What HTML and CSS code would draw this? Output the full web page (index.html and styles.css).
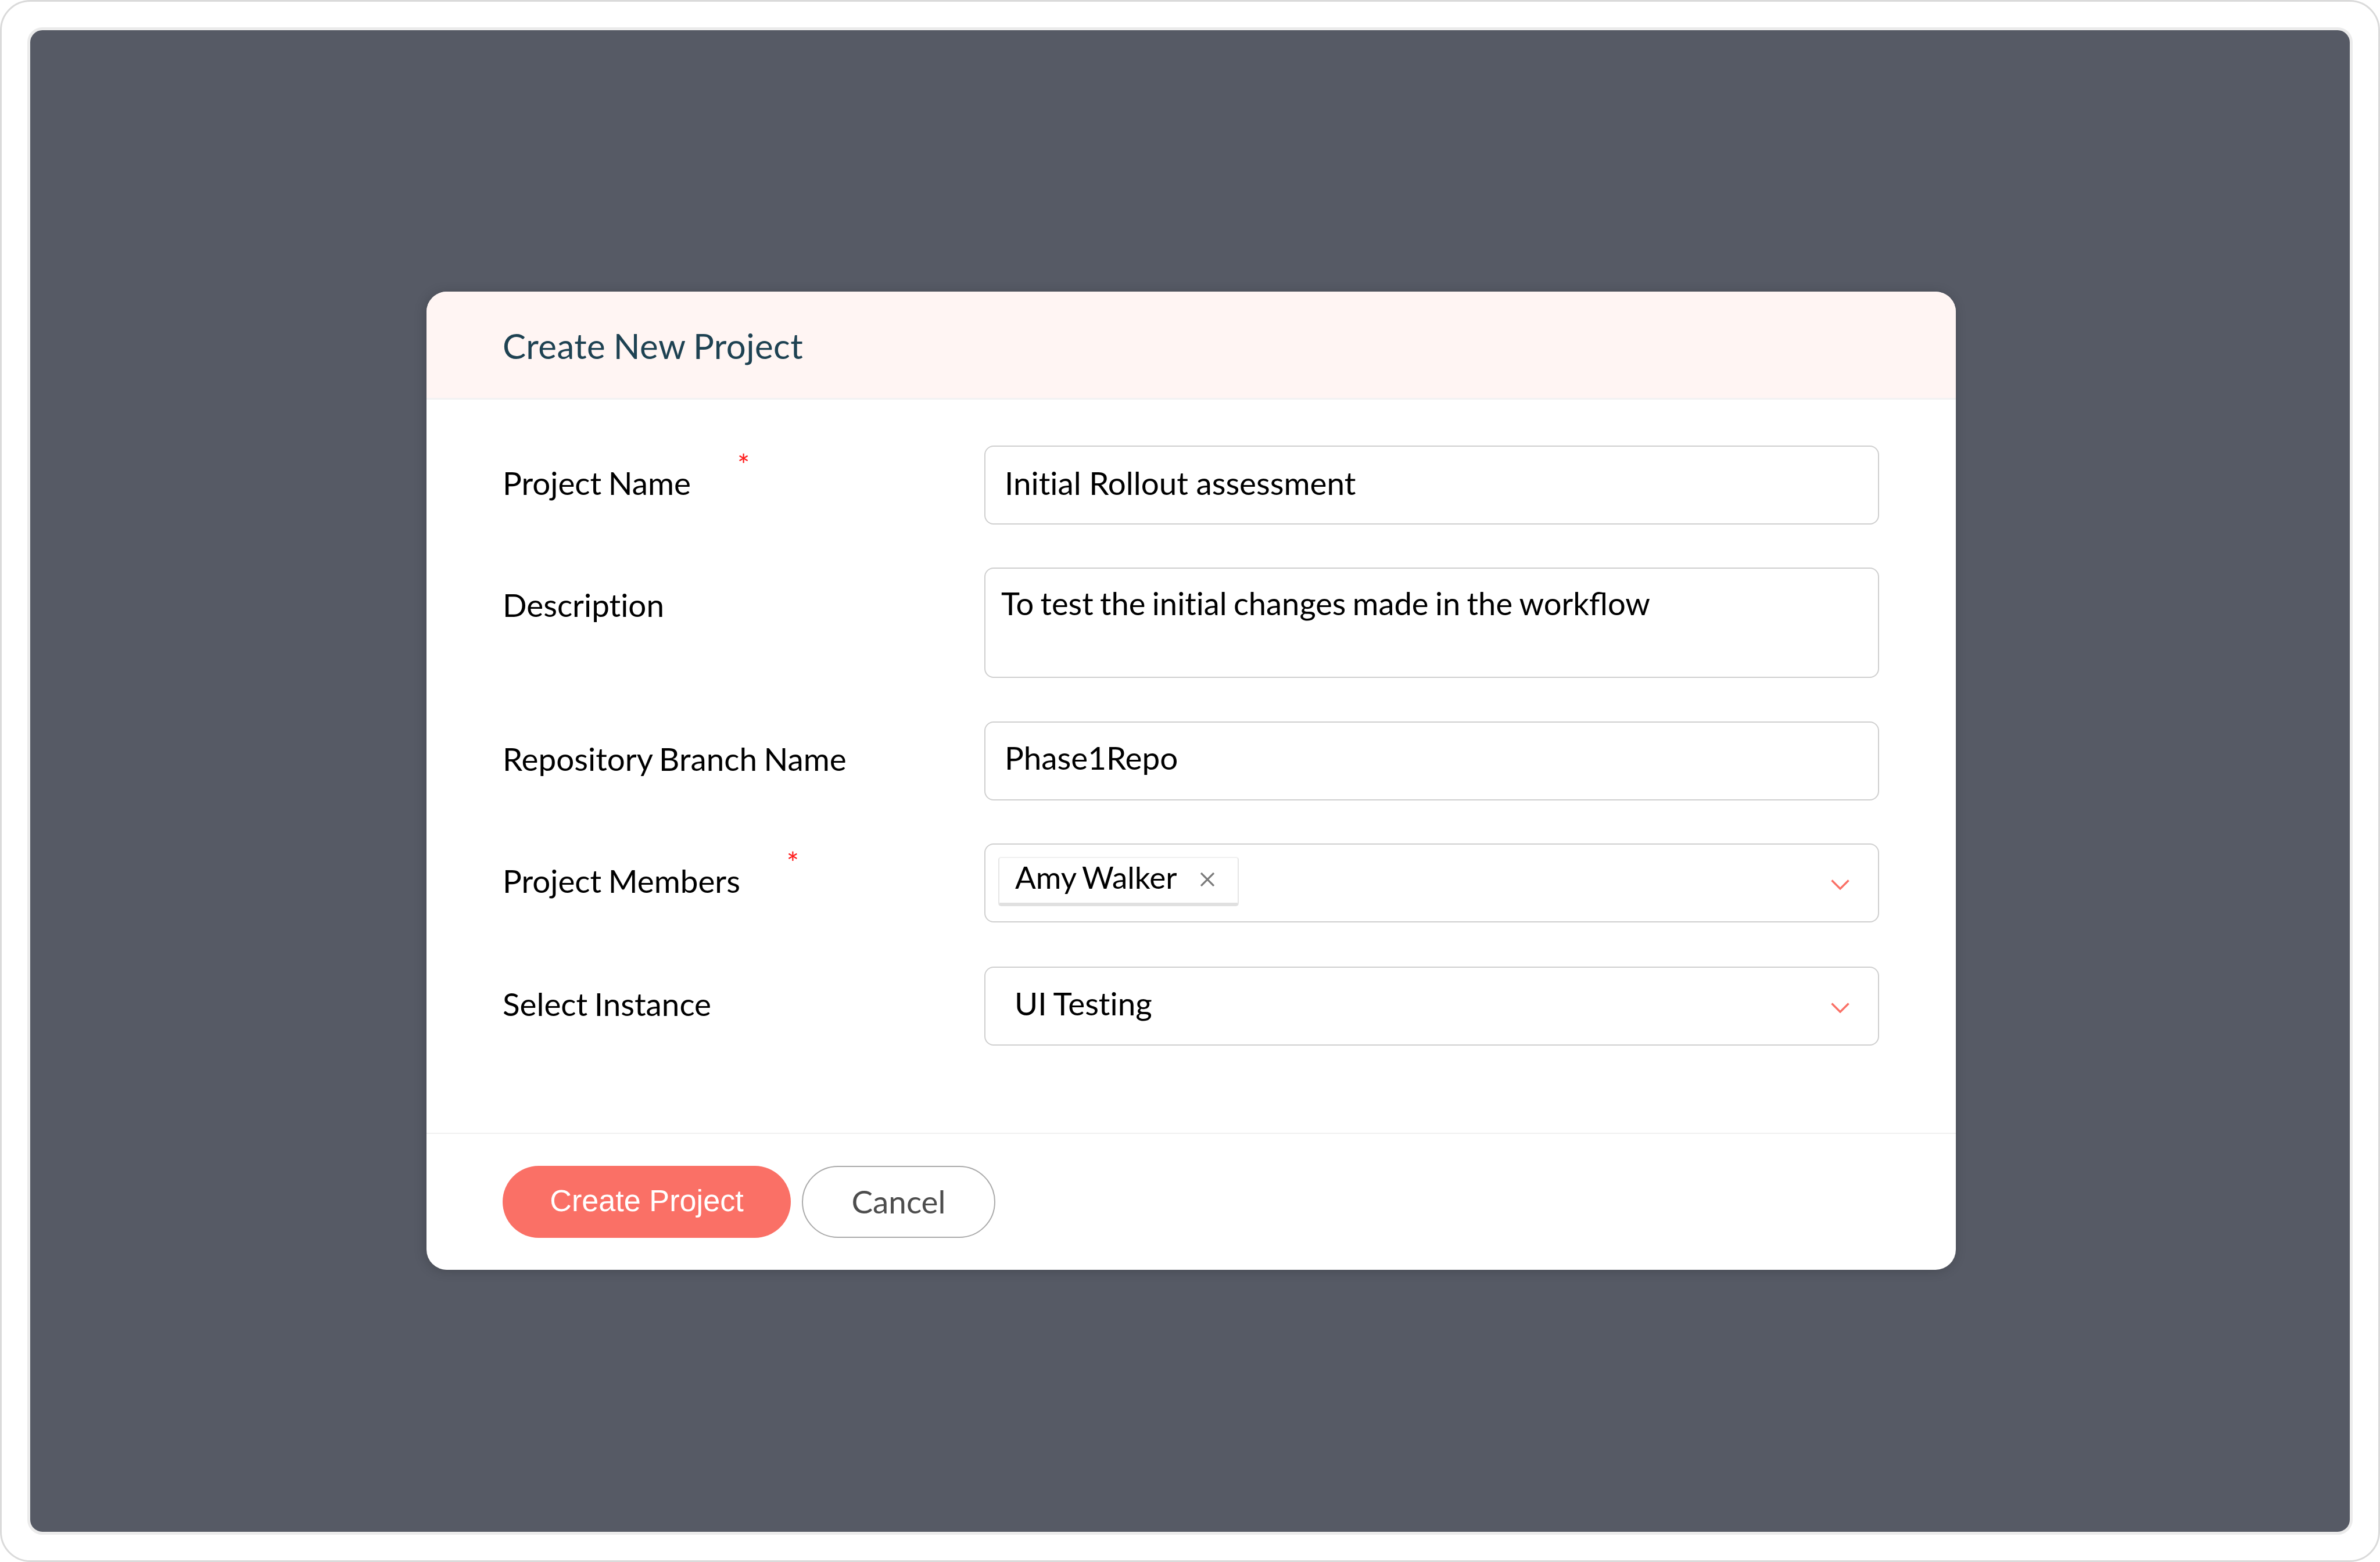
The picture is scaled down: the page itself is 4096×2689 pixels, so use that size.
FILE: index.html
```html
<!DOCTYPE html>
<html lang="en">
<head>
    <meta charset="UTF-8">
    <meta name="viewport" content="width=device-width, initial-scale=1.0">
    <title>Create New Project</title>
    <link rel="stylesheet" href="styles.css">
</head>
<body>
    <div class="frame">
        <div class="overlay">
            <div class="modal">
                <div class="modal-header">
                    <h1>Create New Project</h1>
                </div>
                <form class="modal-body">
                    <div class="form-row">
                        <label>Project Name<span class="required">*</span></label>
                        <div class="field">Initial Rollout assessment</div>
                    </div>
                    <div class="form-row row-description">
                        <label>Description</label>
                        <div class="field textarea">To test the initial changes made in the <span class="liga">workflow</span></div>
                    </div>
                    <div class="form-row">
                        <label>Repository Branch Name</label>
                        <div class="field repo">Phase1Repo</div>
                    </div>
                    <div class="form-row row-members">
                        <label>Project Members<span class="required">*</span></label>
                        <div class="field select members">
                            <div class="tag">
                                <span>Amy Walker</span>
                                <svg class="remove" viewBox="0 0 24 24"><path d="M1 1L23 23M23 1L1 23"/></svg>
                            </div>
                            <svg class="arrow" viewBox="0 0 32 18"><path d="M1.5 1.5L16 16L30.5 1.5"/></svg>
                        </div>
                    </div>
                    <div class="form-row">
                        <label>Select Instance</label>
                        <div class="field select">
                            <span>UI Testing</span>
                            <svg class="arrow" viewBox="0 0 32 18"><path d="M1.5 1.5L16 16L30.5 1.5"/></svg>
                        </div>
                    </div>
                </form>
                <div class="modal-footer">
                    <button type="button" class="btn btn-primary">Create Project</button>
                    <button type="button" class="btn btn-cancel">Cancel</button>
                </div>
            </div>
        </div>
    </div>
</body>
</html>
```
FILE: styles.css
```css
* {
    box-sizing: border-box;
}
body {
    margin: 0;
    background: #fff;
    font-family: Lato, sans-serif;
    font-size: 54.8px;
    font-variant-ligatures: no-common-ligatures;
    color: #000;
}
.liga {
    font-variant-ligatures: normal;
}
.frame {
    height: 2689px;
    padding: 44px;
    border: 3px solid #dadada;
    border-radius: 52px;
}
.overlay {
    height: 100%;
    padding: 450px 0 0 682px;
    border: 5px solid #ebebeb;
    border-radius: 26px;
    background: #565a65;
}
.modal {
    display: flex;
    flex-direction: column;
    width: 2632px;
    height: 1684px;
    border-radius: 35px;
    background: #fff;
    box-shadow: -2px 2px 20px rgba(0, 0, 0, 0.18);
    overflow: hidden;
}
.modal-header {
    height: 186px;
    padding: 60px 131px 0;
    border-bottom: 3px solid #f2f2f2;
    background: #fff5f3;
}
.modal-header h1 {
    margin: 0;
    font-size: 60px;
    font-weight: 400;
    line-height: 66px;
    letter-spacing: 0.4px;
    word-spacing: -2px;
    color: #1e4252;
}
.modal-body {
    flex: 1;
    display: flex;
    flex-direction: column;
    gap: 74px;
    padding: 79px 132px 0 131px;
}
.form-row {
    display: flex;
    justify-content: space-between;
    line-height: 66px;
}
.form-row label {
    padding-top: 31px;
    word-spacing: -2.5px;
}
.row-description {
    margin-bottom: 1px;
}
.row-members {
    margin-bottom: 2px;
}
.required {
    margin-left: 80px;
    font-size: 50px;
    line-height: 0;
    vertical-align: 33px;
    color: #ff1a1a;
}
.field {
    width: 1540px;
    height: 136px;
    padding: 29px 34px 0 33px;
    border: 2px solid #cfcfcf;
    border-radius: 16px;
    word-spacing: -0.5px;
}
.textarea {
    height: 190px;
    padding: 26px 27px 0;
    font-size: 54.3px;
    word-spacing: -2.5px;
}
.repo {
    padding-top: 27px;
}
.select {
    display: flex;
    justify-content: space-between;
    padding: 28px 49px 0 50px;
    word-spacing: -1.5px;
}
.members {
    padding: 21px 49px 0 22px;
}
.tag {
    display: flex;
    gap: 40px;
    height: 85px;
    padding: 0 40px 0 27px;
    border: 2px solid #e5e5e5;
    border-top-color: #f0f0f0;
    border-bottom: 6px solid #e0e0e0;
    border-radius: 5px;
    font-size: 53px;
    line-height: 65px;
    word-spacing: -2.5px;
}
.remove {
    width: 24px;
    height: 24px;
    margin-top: 25px;
    fill: none;
    stroke: #7a7a7a;
    stroke-width: 3.2;
}
.arrow {
    width: 32px;
    height: 18px;
    margin-top: 32px;
    fill: none;
    stroke: #fa7066;
    stroke-width: 3.4;
}
.members .arrow {
    margin-top: 39px;
}
.modal-footer {
    display: flex;
    gap: 19px;
    height: 236px;
    padding: 55px 131px 0;
    border-top: 2px solid #f0f0f0;
}
.btn {
    height: 124px;
    padding: 0 0 2px;
    border-radius: 62px;
}
.btn-primary {
    width: 496px;
    padding-bottom: 4px;
    border: none;
    background: #fa7066;
    color: #fff;
    font: 52.2px "Liberation Sans", sans-serif;
}
.btn-cancel {
    width: 333px;
    border: 2px solid #aaa;
    background: #fff;
    color: #4d4d4d;
    font: 54.8px Lato, sans-serif;
}
```
